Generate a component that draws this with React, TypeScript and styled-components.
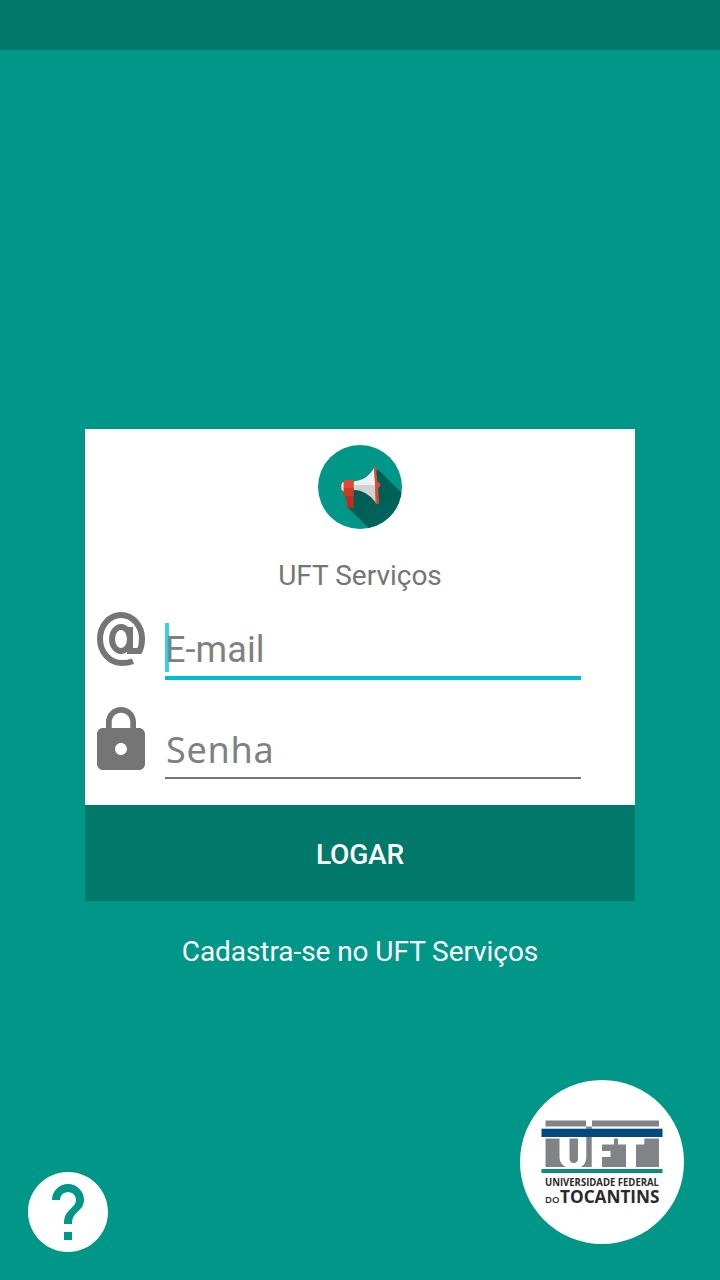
import React from "react";
import styled, { createGlobalStyle } from "styled-components";

const GlobalStyle = createGlobalStyle`
  * { box-sizing: border-box; }
  body { margin: 0; background: #009688; font-family: Roboto, "Noto Sans", sans-serif; }
  svg { display: block; }
`;

const Screen = styled.div`
  min-height: 1280px;
  width: 720px;
  display: flex;
  flex-direction: column;
  align-items: center;
  background: #009688;
`;

const StatusBar = styled.div`
  width: 100%;
  height: 50px;
  background: #00796b;
`;

const Card = styled.form`
  width: 550px;
  margin-top: 379px;
  display: flex;
  flex-direction: column;
  background: #fff;
`;

const Brand = styled.div`
  height: 171px;
  padding-top: 16px;
  display: flex;
  flex-direction: column;
  align-items: center;
`;

const Title = styled.h1`
  margin: 30px 0 0;
  font-size: 28px;
  line-height: 33px;
  font-weight: 400;
  color: #757575;
`;

const Field = styled.div<{ $height: number }>`
  height: ${(p) => p.$height}px;
  display: flex;
`;

const IconSlot = styled.div<{ $top: number }>`
  width: 80px;
  padding-top: ${(p) => p.$top}px;
`;

const Input = styled.label<{ $active?: boolean; $height: number }>`
  position: relative;
  display: flex;
  align-items: flex-end;
  width: 416px;
  height: ${(p) => p.$height}px;
  border-bottom: ${(p) => (p.$active ? "4px solid #00bcd4" : "2px solid #757575")};
`;

const Placeholder = styled.span<{ $font: string; $bottom: number; $left: number; $spacing: number }>`
  padding: 0 0 ${(p) => p.$bottom}px ${(p) => p.$left}px;
  font-family: ${(p) => p.$font}, sans-serif;
  font-size: 36px;
  line-height: 42px;
  letter-spacing: ${(p) => p.$spacing}px;
  color: #808080;
`;

const Caret = styled.span`
  position: absolute;
  left: 0;
  bottom: 4px;
  width: 4px;
  height: 49px;
  background: #00bcd4;
  opacity: 0.75;
`;

const LoginButton = styled.button`
  height: 96px;
  border: 0;
  padding: 3px 0 0;
  background: #00796b;
  color: #fff;
  font-family: Roboto, sans-serif;
  font-size: 28px;
  line-height: 33px;
  font-weight: 500;
  letter-spacing: -0.15px;
`;

const SignUp = styled.a`
  margin-top: 34px;
  font-size: 28px;
  line-height: 33px;
  letter-spacing: -0.07px;
  color: #fff;
`;

const Footer = styled.footer`
  width: 100%;
  margin-top: auto;
  padding: 0 36px 20px 20px;
  display: flex;
  justify-content: space-between;
  align-items: flex-end;
`;

const Seal = styled.div`
  width: 164px;
  height: 164px;
  margin-bottom: 16px;
  border-radius: 50%;
  background: #fff;
`;

const Megaphone = () => (
  <svg width="84" height="84" viewBox="24 24 252 252">
    <defs>
      <clipPath id="disc"><circle cx="150" cy="150" r="126" /></clipPath>
      <linearGradient id="shade" x1="0" y1="0" x2="1" y2="1">
        <stop offset="0" stopColor="#00584f" />
        <stop offset="1" stopColor="#006a60" />
      </linearGradient>
    </defs>
    <circle cx="150" cy="150" r="126" fill="#009688" />
    <path clipPath="url(#disc)" fill="url(#shade)" d="M205 98L310 203V310H213L114 212L130 150Z" />
    <path fill="#b5321f" d="M106 172H131V212Q121 216 112 211Z" />
    <path fill="#df4b32" d="M200 134Q211 136 211 143Q211 151 200 153Z" />
    <path fill="#efefef" d="M130 133Q172 131 193 91L196 145H130Z" />
    <path fill="#d2d2d4" d="M130 144H196L198 197Q172 160 130 158Z" />
    <path fill="#df4b32" d="M94 142Q88 149 92 158H97V142Z" />
    <path fill="#dedee2" d="M102 135H98Q92 142 94 155Q96 163 102 163Z" />
    <path fill="#e0492f" d="M106 129H128Q131 129 131 133V154H101V136Q101 130 106 129Z" />
    <path fill="#c93d27" d="M101 153H131V174Q131 178 127 178H107Q101 176 101 169Z" />
    <path fill="#e14a30" d="M191 88H197Q206 145 207 199Q203 203 197 200Q197 145 191 88Z" />
  </svg>
);

const AtIcon = () => (
  <svg width="72" height="72" viewBox="0 0 72 72" fill="none" stroke="#757575" strokeWidth="6">
    <path d="M48 61.200Q43 63 37 63A22 24 0 0 1 15 39A21 24 0 0 1 57 39Q57 46 54.500 51H45V27" />
    <ellipse cx="36" cy="39" rx="9" ry="12" />
  </svg>
);

const LockIcon = () => (
  <svg width="72" height="72" viewBox="0 0 24 24" fill="#757575">
    <path d="M18 8h-1V6c0-2.760-2.240-5-5-5S7 3.240 7 6v2H6c-1.100 0-2 .9-2 2v10c0 1.100.9 2 2 2h12c1.100 0 2-.9 2-2V10c0-1.100-.9-2-2-2zm-6 9c-1.100 0-2-.9-2-2s.9-2 2-2 2 .9 2 2-.9 2-2 2zm3.100-9H8.900V6c0-1.710 1.390-3.100 3.100-3.100s3.100 1.390 3.100 3.100v2z" />
  </svg>
);

const HelpIcon = () => (
  <svg width="96" height="96" viewBox="0 0 24 24" fill="#fff">
    <path d="M12 2C6.480 2 2 6.480 2 12s4.480 10 10 10 10-4.480 10-10S17.520 2 12 2zm1 17h-2v-2h2v2zm2.070-7.750l-.9.920C13.450 12.900 13 13.500 13 15h-2v-.5c0-1.100.45-2.100 1.170-2.830l1.240-1.260c.37-.36.59-.86.59-1.410 0-1.100-.9-2-2-2s-2 .9-2 2H8c0-2.210 1.790-4 4-4s4 1.790 4 4c0 .88-.36 1.680-.93 2.250z" />
  </svg>
);

const UniversityLogo = () => (
  <svg width="164" height="164" viewBox="520 1080 164 164">
    <g fill="#828387">
      <path d="M545.500 1120.500H586V1126.500H545.500ZM592 1120.500H659V1126.500H592Z" />
      <path d="M545.500 1138.500H559.500V1157Q559.500 1164 566 1167H545.500Z" />
      <path d="M569.500 1138.500H578V1158Q578 1163 573.750 1163Q569.500 1163 569.500 1158Z" />
      <path d="M586.300 1127H591.700V1167H581Q586.300 1164 586.300 1157Z" />
      <path d="M602 1144.500H614V1138.500H618V1144.500H626V1167H602V1157H610.500V1151H602Z" />
      <path d="M644.300 1138.500H659V1167H636V1144.500H644.300Z" />
    </g>
    <rect x="541.500" y="1128.700" width="121" height="8.300" fill="#004a80" />
    <rect x="586.300" y="1126.500" width="5.400" height="2.200" fill="#828387" />
    <rect x="541.500" y="1169" width="121" height="4" fill="#0a8c7c" />
    <g fill="#2b292a" fontFamily="Open Sans, sans-serif">
      <text x="545" y="1186.300" fontSize="10" fontWeight="700" textLength="114" lengthAdjust="spacingAndGlyphs">UNIVERSIDADE FEDERAL</text>
      <text x="545" y="1203.300" fontSize="9.500" fontWeight="600" textLength="14.500" lengthAdjust="spacingAndGlyphs">DO</text>
      <text x="560" y="1203.300" fontSize="17.500" fontWeight="700" textLength="99.500" lengthAdjust="spacingAndGlyphs">TOCANTINS</text>
    </g>
  </svg>
);

export default function App() {
  return (
    <>
      <GlobalStyle />
      <Screen>
        <StatusBar />
        <Card>
          <Brand>
            <Megaphone />
            <Title>UFT Serviços</Title>
          </Brand>
          <Field $height={100}>
            <IconSlot $top={0}><AtIcon /></IconSlot>
            <Input $active $height={80}>
              <Placeholder $font="Roboto" $bottom={5} $left={0} $spacing={0.1}>E-mail</Placeholder>
              <Caret />
            </Input>
          </Field>
          <Field $height={105}>
            <IconSlot $top={4}><LockIcon /></IconSlot>
            <Input $height={79}>
              <Placeholder $font="'Noto Sans'" $bottom={6} $left={1} $spacing={0.75}>Senha</Placeholder>
            </Input>
          </Field>
          <LoginButton type="button">LOGAR</LoginButton>
        </Card>
        <SignUp>Cadastra-se no UFT Serviços</SignUp>
        <Footer>
          <HelpIcon />
          <Seal><UniversityLogo /></Seal>
        </Footer>
      </Screen>
    </>
  );
}
